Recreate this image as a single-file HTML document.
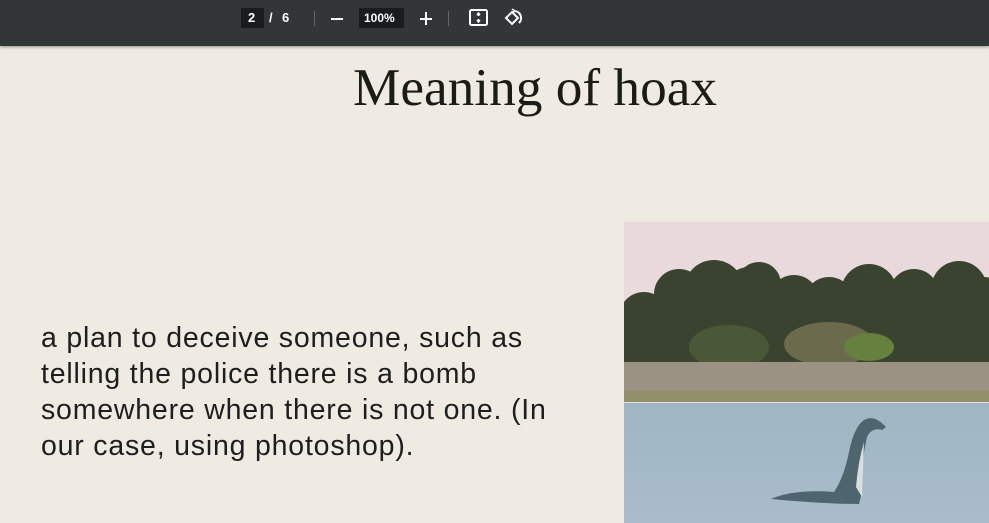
<!DOCTYPE html>
<html><head><style>
body{margin:0;width:989px;height:523px;overflow:hidden;background:#efebe3;position:relative;font-family:"Liberation Sans",sans-serif}
.bar{position:absolute;left:0;top:0;width:989px;height:46px;background:#323639;box-shadow:0 1px 3px rgba(0,0,0,.4)}
.t{position:absolute;color:#fff;font-size:13px;font-weight:bold}
.box{position:absolute;background:#191b1c;height:20px;top:8px}
h1{position:absolute;left:0;width:1070px;text-align:center;top:57px;margin:0;font-family:"Liberation Serif",serif;font-weight:normal;font-size:53.3px;color:#1c1c16}
p{position:absolute;left:41px;top:320px;margin:0;white-space:nowrap;font-size:28.5px;line-height:36px;color:#1e1e1e;letter-spacing:0.8px}
</style></head><body>
<div class="bar">
<div class="box" style="left:241px;width:23px"></div>
<div class="t" style="left:248px;top:10px">2</div>
<div class="t" style="left:269px;top:10px">/</div>
<div class="t" style="left:282px;top:10px">6</div>
<div style="position:absolute;left:314px;top:11px;width:1px;height:15px;background:#666"></div>
<div style="position:absolute;left:331px;top:18px;width:12px;height:2px;background:#fff"></div>
<div class="box" style="left:359px;width:45px"></div>
<div class="t" style="left:364px;top:11px;font-size:12px">100%</div>
<div style="position:absolute;left:420px;top:18px;width:12px;height:2px;background:#fff"></div>
<div style="position:absolute;left:425px;top:12px;width:2px;height:13px;background:#fff"></div>
<div style="position:absolute;left:448px;top:11px;width:1px;height:15px;background:#666"></div>
<svg style="position:absolute;left:469px;top:9px" width="20" height="18" viewBox="0 0 20 18"><rect x="1" y="1" width="17" height="15" rx="1.5" fill="none" stroke="#fff" stroke-width="2"/><path d="M9.5 4v3M8 6l1.5-2 1.5 2M9.5 13v-3M8 11l1.5 2 1.5-2" stroke="#fff" stroke-width="1.5" fill="none"/></svg>
<svg style="position:absolute;left:504px;top:8px" width="20" height="20" viewBox="0 0 20 20"><path d="M2 10l6-6 6 6-6 6z" fill="none" stroke="#fff" stroke-width="2"/><path d="M10 3a7 7 0 0 1 5 12" fill="none" stroke="#fff" stroke-width="2"/><path d="M8 1l3 2-3 2" fill="none" stroke="#fff" stroke-width="1.5"/></svg>
</div>
<h1>Meaning of hoax</h1>
<p>a plan to deceive someone, such as<br>telling the police there is a bomb<br>somewhere when there is not one. (In<br>our case, using photoshop).</p>
<svg style="position:absolute;left:624px;top:222px" width="365" height="301" viewBox="0 0 365 301">
<defs><linearGradient id="s" x1="0" y1="0" x2="0" y2="1"><stop offset="0" stop-color="#e8d8dc"/><stop offset="1" stop-color="#ecdfdc"/></linearGradient>
<linearGradient id="w" x1="0" y1="0" x2="0" y2="1"><stop offset="0" stop-color="#9fb6c2"/><stop offset="1" stop-color="#a9bccb"/></linearGradient></defs>
<rect width="365" height="301" fill="url(#s)"/>
<g fill="#3a4330">
<circle cx="20" cy="95" r="25"/><circle cx="55" cy="72" r="25"/><circle cx="90" cy="68" r="30"/><circle cx="125" cy="70" r="25"/><circle cx="135" cy="62" r="22"/><circle cx="170" cy="78" r="25"/><circle cx="205" cy="80" r="25"/><circle cx="245" cy="70" r="28"/><circle cx="290" cy="72" r="25"/><circle cx="335" cy="67" r="28"/><circle cx="360" cy="75" r="20"/>
</g>
<rect x="0" y="80" width="365" height="70" fill="#3a4330"/>
<ellipse cx="105" cy="125" rx="40" ry="22" fill="#4a5838"/>
<ellipse cx="205" cy="122" rx="45" ry="22" fill="#6b6a4c"/>
<ellipse cx="245" cy="125" rx="25" ry="14" fill="#66803f"/>
<rect x="0" y="140" width="365" height="38" fill="#9c9284"/>
<rect x="0" y="168" width="365" height="12" fill="#938f6a"/>
<rect x="0" y="181" width="365" height="120" fill="url(#w)"/>
<path d="M147 277 Q170 267 210 270 Q220 255 225 230 Q230 205 240 198 Q250 192 262 205 L258 208 Q248 205 243 215 Q237 240 238 270 L235 282 Q200 282 147 277Z" fill="#4e6570"/>
<path d="M232 265 Q234 240 240 220 L238 275Z" fill="#d8dde0"/>
</svg>
</body></html>
